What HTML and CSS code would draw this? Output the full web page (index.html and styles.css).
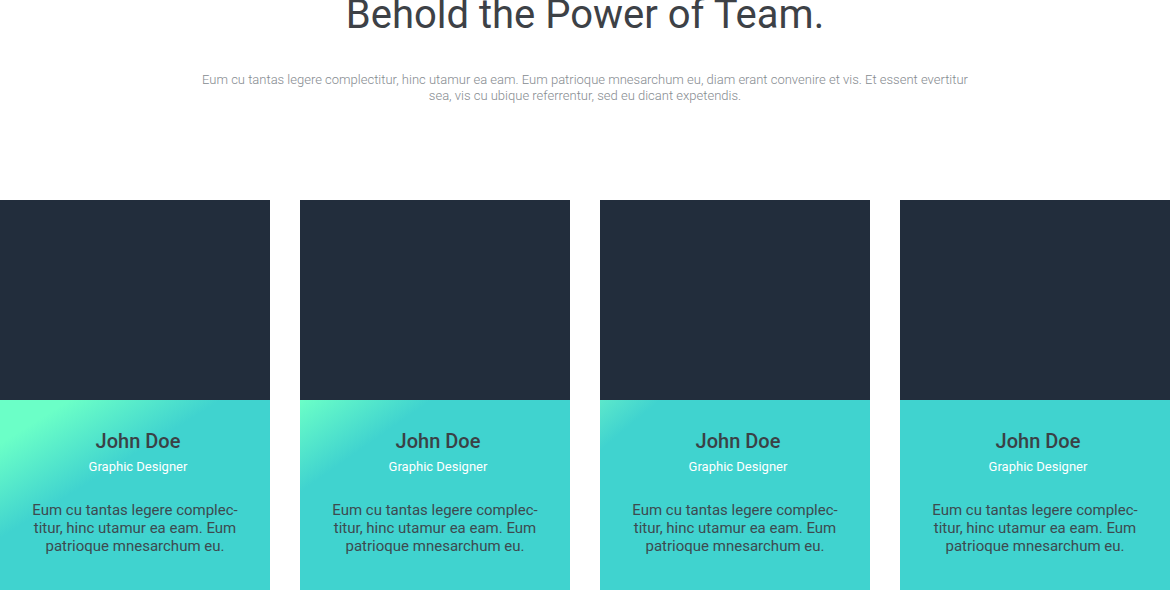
FILE: index.html
```html
<!DOCTYPE html>
<html lang="en">
<head>
<meta charset="utf-8">
<title>Team</title>
<link rel="stylesheet" href="styles.css">
</head>
<body>
<section class="team">
  <header class="team-head">
    <h1 class="team-title">Behold the Power of Team.</h1>
    <p class="team-lead">Eum cu tantas legere complectitur, hinc utamur ea eam. Eum patrioque mnesarchum eu, diam erant convenire et vis. Et essent evertitur sea, vis cu ubique referrentur, sed eu dicant expetendis.</p>
  </header>
  <div class="team-grid">
    <article class="card">
      <div class="card-photo"></div>
      <div class="card-body glow-lg">
        <h2 class="card-name">John Doe</h2>
        <p class="card-role">Graphic Designer</p>
        <p class="card-text">Eum cu tantas legere complec&shy;titur, hinc utamur ea eam. Eum patrioque mnesarchum eu.</p>
      </div>
    </article>
    <article class="card">
      <div class="card-photo"></div>
      <div class="card-body glow-md">
        <h2 class="card-name">John Doe</h2>
        <p class="card-role">Graphic Designer</p>
        <p class="card-text">Eum cu tantas legere complec&shy;titur, hinc utamur ea eam. Eum patrioque mnesarchum eu.</p>
      </div>
    </article>
    <article class="card">
      <div class="card-photo"></div>
      <div class="card-body glow-sm">
        <h2 class="card-name">John Doe</h2>
        <p class="card-role">Graphic Designer</p>
        <p class="card-text">Eum cu tantas legere complec&shy;titur, hinc utamur ea eam. Eum patrioque mnesarchum eu.</p>
      </div>
    </article>
    <article class="card">
      <div class="card-photo"></div>
      <div class="card-body">
        <h2 class="card-name">John Doe</h2>
        <p class="card-role">Graphic Designer</p>
        <p class="card-text">Eum cu tantas legere complec&shy;titur, hinc utamur ea eam. Eum patrioque mnesarchum eu.</p>
      </div>
    </article>
  </div>
</section>
</body>
</html>
```
FILE: styles.css
```css
html, body {
  margin: 0;
  padding: 0;
  background: #ffffff;
  overflow: hidden;
}
body {
  font-family: Roboto, "Liberation Sans", sans-serif;
  color: #3d4146;
}
.team-head {
  text-align: center;
  padding: 0 0 96px;
}
.team-title {
  margin: -8px 0 0;
  font-size: 40px;
  font-weight: 400;
  line-height: 46px;
  color: #3d4146;
}
.team-lead {
  margin: 34px auto 0;
  max-width: 775px;
  font-size: 13px;
  font-weight: 300;
  line-height: 16px;
  color: #868b90;
}
.team-grid {
  display: grid;
  grid-template-columns: repeat(4, 1fr);
  gap: 30px;
}
.card-photo {
  height: 200px;
  background: #222d3c;
}
.card-body {
  background: #40d3cf;
  text-align: center;
  padding: 28px 30px 40px;
}
.glow-lg {
  background: linear-gradient(148deg, #6bffc7 0%, #6bffc7 12%, #40d3cf 38%, #40d3cf 100%);
}
.glow-md {
  background: linear-gradient(145deg, #6bffc7 0%, #40d3cf 24%, #40d3cf 100%);
}
.glow-sm {
  background: linear-gradient(140deg, #5ce8cb 0%, #40d3cf 12%, #40d3cf 100%);
}
.card-name {
  margin: 0;
  padding-left: 6px;
  font-size: 20px;
  font-weight: 500;
  line-height: 26px;
  color: #3b4146;
}
.card-role {
  margin: 5px 0 0;
  padding-left: 6px;
  font-size: 13px;
  line-height: 16px;
  color: #ffffff;
}
.card-text {
  margin: 26px 0 0;
  font-size: 15px;
  line-height: 18px;
  color: #3d4a50;
  hyphens: manual;
}
```
